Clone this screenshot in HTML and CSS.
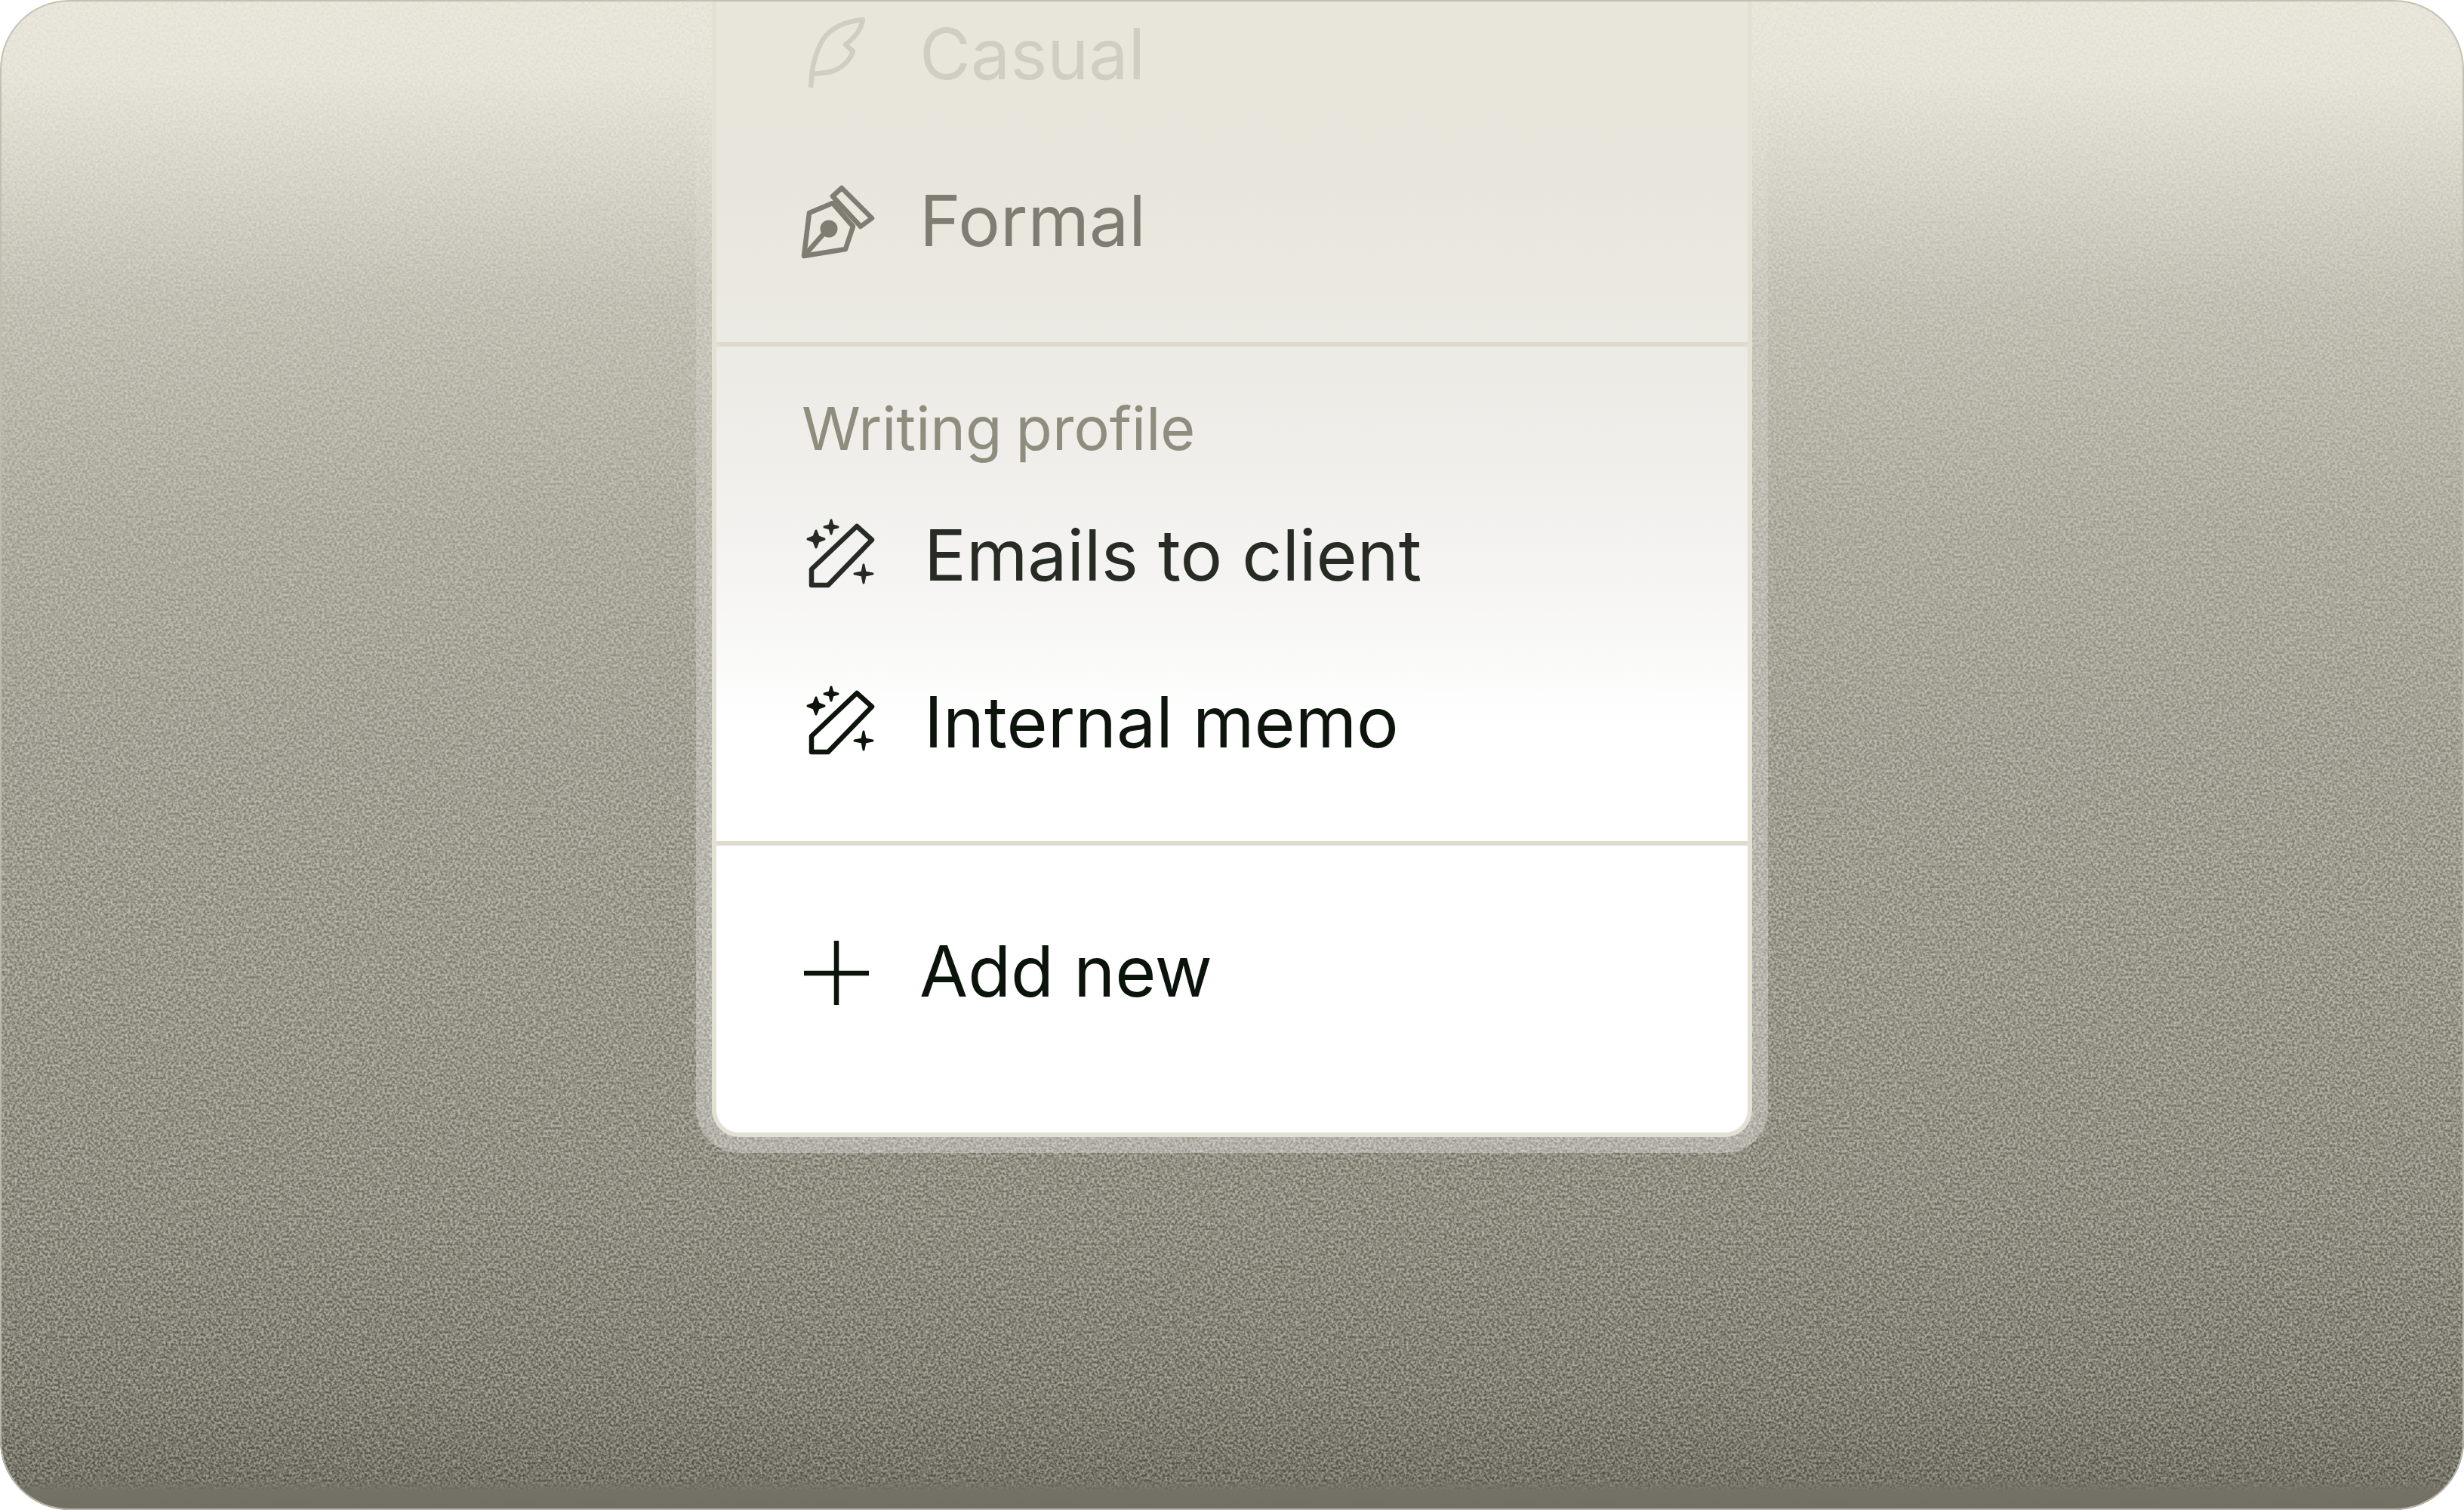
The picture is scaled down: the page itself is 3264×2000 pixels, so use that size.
FILE: index.html
```html
<!DOCTYPE html>
<html lang="en">
<head>
  <meta charset="UTF-8" />
  <title>Writing style menu</title>
  <link rel="stylesheet" href="styles.css">
</head>
<body>
  <div class="frame">
    <svg class="noise" width="3264" height="2000">
      <filter id="grain" x="0" y="0" width="100%" height="100%" color-interpolation-filters="sRGB">
        <feTurbulence type="fractalNoise" baseFrequency="0.3" numOctaves="2" seed="7" />
        <feColorMatrix type="matrix" values="2.4 0 0 0 -0.7  2.4 0 0 0 -0.7  2.4 0 0 0 -0.7  0 0 0 0 1" />
      </filter>
      <rect width="3264" height="2000" filter="url(#grain)" />
    </svg>

    <div class="menu">
      <div class="section section-top">
        <div class="row row-casual">
          <svg class="icon" viewBox="0 10 130 130">
            <path d="M34 118 L36 95 C39 78 44 62 54 49 C66 36 84 30 103 28 C101 40 92 52 80 61 L90 70 C86 82 74 94 60 97 C52 99 44 99 36 100" />
          </svg>
          <span>Casual</span>
        </div>
        <div class="row row-formal">
          <svg class="icon" viewBox="0 -3 130 130">
            <path d="M25 107 L32 50 L63 37 L90 68 L80 98 Z" />
            <path d="M63 28 L75 17 L115 57 L100 68 Z" />
            <path d="M25 107 L56 72" />
            <circle class="dot" cx="58" cy="71" r="10" />
          </svg>
          <span>Formal</span>
        </div>
      </div>

      <div class="section section-profile">
        <div class="label">Writing profile</div>
        <div class="row row-emails">
          <svg class="icon" viewBox="0 10 130 130">
            <path d="M35 113 L35 92 L95 35 L115 53 L57 113 Z" />
            <path class="dot" d="M41 41 L44 49 L52 52 L44 55 L41 63 L38 55 L30 52 L38 49 Z" />
            <path class="dot" d="M61 27 L63 34 L70 36 L63 38 L61 45 L59 38 L52 36 L59 34 Z" />
            <path class="dot" d="M104 86 L106 96 L116 98 L106 100 L104 110 L102 100 L92 98 L102 96 Z" />
          </svg>
          <span>Emails to client</span>
        </div>
        <div class="row row-memo">
          <svg class="icon" viewBox="0 10 130 130">
            <path d="M35 113 L35 92 L95 35 L115 53 L57 113 Z" />
            <path class="dot" d="M41 41 L44 49 L52 52 L44 55 L41 63 L38 55 L30 52 L38 49 Z" />
            <path class="dot" d="M61 27 L63 34 L70 36 L63 38 L61 45 L59 38 L52 36 L59 34 Z" />
            <path class="dot" d="M104 86 L106 96 L116 98 L106 100 L104 110 L102 100 L92 98 L102 96 Z" />
          </svg>
          <span>Internal memo</span>
        </div>
      </div>

      <div class="section section-add">
        <div class="row row-add">
          <svg class="icon" viewBox="0 0 130 130">
            <path d="M68 23 V108 M25 66 H111" />
          </svg>
          <span>Add new</span>
        </div>
      </div>
    </div>
  </div>
</body>
</html>
```

FILE: styles.css
```css
html, body {
  margin: 0;
  background: #ffffff;
}

.frame {
  position: relative;
  isolation: isolate;
  width: 3264px;
  height: 2000px;
  border-radius: 92px;
  overflow: hidden;
  font-family: Inter, sans-serif;
  background: linear-gradient(180deg,
    #e8e5da 0,
    #e6e3d8 100px,
    #d6d3c8 240px,
    #c2c0b4 400px,
    #aeac9f 700px,
    #a2a094 1000px,
    #9a988b 1300px,
    #908e82 1600px,
    #828074 1850px,
    #716f64 2000px);
}

/* thin edge line on top of everything */
.frame::after {
  content: "";
  position: absolute;
  inset: 0;
  border-radius: 92px;
  box-shadow: inset 0 0 0 2px rgba(190, 188, 174, 0.9);
}

.noise {
  position: absolute;
  top: 0;
  left: 0;
  opacity: 0.3;
  mix-blend-mode: overlay;
  -webkit-mask-image: linear-gradient(180deg, rgba(0, 0, 0, 0.5) 0, rgba(0, 0, 0, 0.6) 300px, #000 1200px, #000 1960px, transparent 1975px);
  mask-image: linear-gradient(180deg, rgba(0, 0, 0, 0.5) 0, rgba(0, 0, 0, 0.6) 300px, #000 1200px, #000 1960px, transparent 1975px);
}

.menu {
  position: relative;
  display: flow-root;
  box-sizing: border-box;
  width: 1378px;
  height: 1506px;
  margin: 0 auto;
  border: 6px solid #e2dfd3;
  border-top: none;
  border-radius: 0 0 36px 36px;
  background: linear-gradient(180deg,
    #e8e5da 0,
    #e8e6dc 250px,
    #ebeae4 454px,
    #efeeea 600px,
    #f5f4f2 760px,
    #f9f9f8 860px,
    #ffffff 960px);
}

/* pale ring round the menu, fades out toward the top */
.menu::before {
  content: "";
  position: absolute;
  z-index: -1;
  top: 0;
  left: -27px;
  right: -27px;
  bottom: -27px;
  border-radius: 0 0 57px 57px;
  background: linear-gradient(180deg,
    rgba(255, 255, 255, 0) 40px,
    rgba(255, 255, 255, 0.1) 300px,
    rgba(255, 255, 255, 0.22) 800px,
    rgba(255, 255, 255, 0.3) 1400px);
}

.section {
  border-bottom: 6px solid #dedace;
}

.section-top {
  margin-top: -38px;
  padding-bottom: 49px;
}

.section-profile {
  padding-top: 63px;
  padding-bottom: 46px;
}

.section-add {
  border-bottom: none;
  padding-top: 57px;
}

.label {
  height: 90px;
  line-height: 90px;
  margin-bottom: 14px;
  padding-left: 113px;
  font-size: 79px;
  word-spacing: -4px;
  color: #8f8d7e;
  filter: blur(0.6px);
}

.row {
  display: flex;
  align-items: center;
  height: 221px;
  padding-left: 91px;
  gap: 48px;
  font-size: 93px;
  line-height: 1;
  filter: blur(0.6px);
}

.row span {
  margin-top: -3px;
}

.icon {
  width: 130px;
  height: 130px;
  flex: none;
  fill: none;
  stroke: currentColor;
  stroke-width: 6.5;
  stroke-linejoin: round;
}

.icon .dot {
  fill: currentColor;
  stroke-width: 3;
}

.row-casual {
  color: #d0cec2;
}

.row-formal {
  color: #7f7d71;
}

.row-emails {
  color: #272b24;
  gap: 54px;
}

.row-memo {
  color: #0c140c;
  gap: 54px;
}

.row-add {
  color: #0a140a;
}
```
